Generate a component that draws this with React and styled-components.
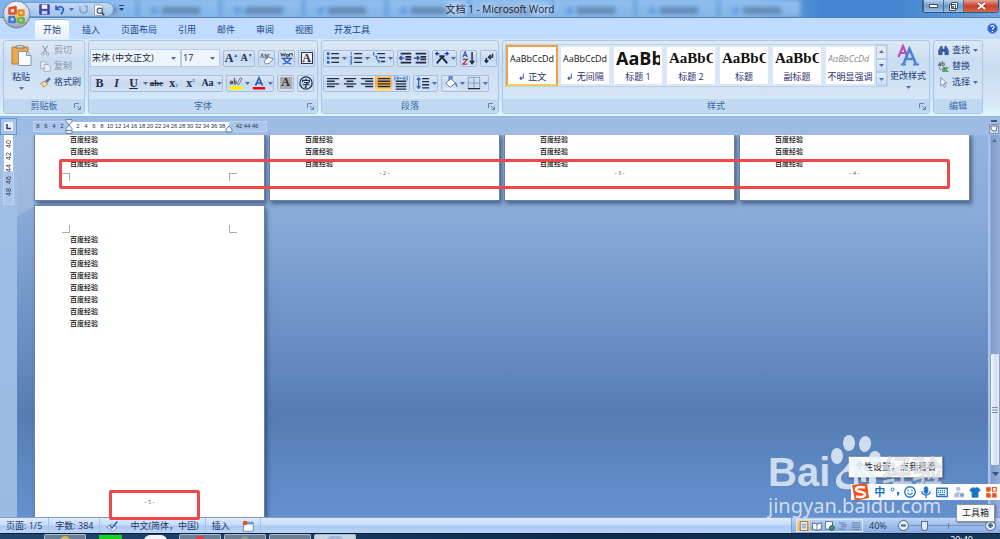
import styled, { createGlobalStyle } from 'styled-components';

const GlobalStyle = createGlobalStyle`
  * {
    box-sizing: border-box;
  }

  body {
    margin: 0;
    font-family: 'Open Sans', 'Noto Sans CJK SC', sans-serif;
    font-size: 9px;
    line-height: 12px;
    color: #1f3f7a;
    overflow: hidden;
  }

  button, select, input {
    font: inherit;
    color: inherit;
    margin: 0;
    padding: 0;
    border: 0;
    background: none;
  }

  svg {
    display: block;
    flex: none;
  }
`;

const Window = styled.div`
  position: relative;
  height: 100vh;
  display: flex;
  flex-direction: column;
  overflow: hidden;
`;

/* ---------- title bar ---------- */

const TitleBar = styled.header`
  position: relative;
  height: 18px;
  flex: none;
  display: grid;
  grid-template-columns: 1fr auto 1fr;
  align-items: start;
  background: linear-gradient(90deg, #7fb3ea 0%, #86b8ec 75%, #4186cf 82%, #4387d0 90%, #6ca5dd 100%);
  border-bottom: 1px solid #5580b4;
  overflow: hidden;
`;

const TitleLeft = styled.div`
  display: flex;
`;

const GlassTabs = styled.div`
  position: absolute;
  inset: 0;
  padding-left: 56px;
  display: flex;
  filter: blur(2px);
`;

const GlassTab = styled.div`
  width: 83px;
  flex: none;
  display: flex;
  align-items: center;
  gap: 4px;
  padding: 4px 6px 0 12px;
  background: linear-gradient(#90bff0, #84b4e6);
  border-right: 3px solid #5c98d8;

  &::before {
    content: '';
    width: 7px;
    height: 7px;
    border-radius: 50%;
    background: #5f9ae0;
  }

  &::after {
    content: '';
    width: 38px;
    height: 7px;
    background: #6289b6;
  }
`;

const Caption = styled.h1`
  position: relative;
  margin: 0;
  padding-top: 2px;
  text-align: center;
  font-size: 10px;
  line-height: 15px;
  font-weight: 400;
  color: #10203c;
  text-shadow: 0 0 5px #fff, 0 0 8px #fff;
`;

const QuickBar = styled.div`
  position: relative;
  margin: 2px 0 0 20px;
  padding: 0 8px 0 18px;
  height: 15px;
  width: 94px;
  display: flex;
  align-items: center;
  gap: 4px;
  border: 1px solid #6f9ccf;
  border-radius: 0 8px 8px 0;
  background: linear-gradient(#c3daf5, #a3c4ec);
`;

const QuickMore = styled.button`
  position: relative;
  width: 15px;
  height: 16px;
  display: grid;
  place-items: center;
`;

const Orb = styled.button`
  position: absolute;
  left: 2px;
  top: 0;
  z-index: 3;
`;

const WindowButtons = styled.div`
  position: relative;
  justify-self: end;
  display: flex;
  margin-right: 1px;
  height: 13px;
  border: 1px solid #33567f;
  border-top: 0;
  border-radius: 0 0 4px 4px;
  overflow: hidden;
`;

const WindowButton = styled.button`
  width: ${props => props.$close ? 35 : 20}px;
  display: grid;
  place-items: center;
  border-left: 1px solid #47688f;
  background: ${props => props.$close
    ? 'linear-gradient(#e6a497, #c8402b 50%, #d66a4e)'
    : 'linear-gradient(#b9d3ee, #6f9aca 50%, #9dc0e4)'};
`;

/* ---------- ribbon ---------- */

const TabStrip = styled.nav`
  height: 21px;
  flex: none;
  display: flex;
  align-items: flex-end;
  gap: 5px;
  padding: 0 2px 0 35px;
  background: #bfdbff;
`;

const Tab = styled.button`
  height: 20px;
  padding: 0 8px;
  line-height: 18px;
  color: #1d4585;
  border-radius: 3px 3px 0 0;
  border: ${props => props.$active ? '1px solid #9bbbe3' : '1px solid transparent'};
  border-width: 1px 0 0;
  background: ${props => props.$active ? 'linear-gradient(#fff, #e4eef9)' : 'none'};
`;

const Help = styled.button`
  margin: 0 0 5px auto;
`;

const Ribbon = styled.section`
  height: 78px;
  flex: none;
  display: flex;
  gap: 3px;
  padding: 1px 17px 2px 3px;
  border-bottom: 1px solid #8db2e3;
  background: linear-gradient(#dbe7f6, #c9dcf2 40%, #d5e6f6 80%, #dff6ff);
`;

const Panel = styled.section`
  flex: ${props => props.$grow ? '1 1 0' : 'none'};
  width: ${props => props.$width ? props.$width + 'px' : 'auto'};
  min-width: 0;
  display: flex;
  flex-direction: column;
  border: 1px solid #a9c6e8;
  border-radius: 3px;
  background: linear-gradient(#dde8f5, #d0e0f2 22%, #c9dcf0 24%, #dae9f8);
  overflow: hidden;
`;

const PanelBody = styled.div`
  flex: 1;
  display: flex;
  min-height: 0;
  padding: 0 1px;
`;

const PanelTitle = styled.footer`
  height: 14px;
  flex: none;
  display: grid;
  grid-template-columns: 10px 1fr 10px;
  align-items: center;
  text-align: center;
  color: #3b68a8;
  background: #c1d8f1;
`;

const ToolRows = styled.div`
  flex: 1;
  display: flex;
  flex-direction: column;
  gap: 7px;
  padding-top: 8px;
`;

const ToolRow = styled.div`
  height: 18px;
  display: flex;
  align-items: center;
  gap: 3px;
`;

const ToolGroup = styled.div`
  height: 17px;
  display: flex;
  border: 1px solid #a3bee2;
  border-radius: 2px;
  background: linear-gradient(#dbe7f6, #c5d8ef 50%, #d3e3f5);
`;

const Tool = styled.button`
  width: ${props => props.$narrow ? 15 : 17}px;
  display: grid;
  place-items: center;
  color: #1e2c45;
  background: ${props => props.$on ? 'linear-gradient(#f5c283, #fba63a 50%, #ffe08a)' : 'none'};
`;

const Drop = styled.button`
  width: 6px;
  display: grid;
  place-items: center;
`;

const ComboBox = styled.label`
  position: relative;
  width: ${props => props.$width}px;
  height: 18px;
  margin-right: ${props => props.$joined ? -3 : 0}px;
  display: flex;
  align-items: center;
  padding-right: 4px;
  border: 1px solid #b4cdea;
  background: #edf4fc;

  select {
    flex: 1;
    min-width: 0;
    appearance: none;
    padding-left: 1px;
    color: #16243c;
  }
`;

const BigButton = styled.button`
  width: ${props => props.$width}px;
  display: flex;
  flex-direction: column;
  align-items: center;
  padding-top: 3px;
  gap: 4px;
  white-space: nowrap;
`;

const SmallList = styled.div`
  display: flex;
  flex-direction: column;
  padding: 1px 0 0 3px;
`;

const SmallButton = styled.button`
  height: 16px;
  display: flex;
  align-items: center;
  gap: 3px;
  color: ${props => props.disabled ? '#8d98a9' : '#1f3f7a'};
  white-space: nowrap;
`;

/* ---------- style gallery ---------- */

const Gallery = styled.div`
  height: 43px;
  margin: 3px 0 0 1px;
  display: flex;
  border: 1px solid #bcd2ec;
  background: #d9e7f7;
`;

const GalleryItems = styled.div`
  display: flex;
  gap: 1px;
  width: 370px;
`;

const StyleCard = styled.button`
  width: 52px;
  flex: none;
  display: flex;
  flex-direction: column;
  align-items: center;
  border: ${props => props.$selected ? '2px solid #f0a03c' : '2px solid #d9e7f7'};
  border-bottom-color: ${props => props.$selected ? '#f8cf55' : '#d9e7f7'};
  background: #fff;
  overflow: hidden;
  color: #1f2d6e;
`;

const Sample = styled.span`
  width: 44px;
  height: 24px;
  line-height: 23px;
  overflow: hidden;
  text-align: left;
  white-space: nowrap;
  color: ${props => props.$faded ? '#8a8a8a' : '#111'};
  font-style: ${props => props.$faded ? 'italic' : 'normal'};
  font-weight: ${props => props.$size > 9 ? 700 : 400};
  font-size: ${props => props.$size}px;
  font-family: ${props => props.$serif ? "'Liberation Serif', serif" : "'Open Sans', sans-serif"};
`;

const GalleryScroll = styled.div`
  width: 11px;
  display: flex;
  flex-direction: column;

  button {
    flex: 1;
    display: grid;
    place-items: center;
    border: 1px solid #b5cbe8;
    background: linear-gradient(#e4eefa, #c8dbf3);
  }

  button:first-child {
    background: #e6e8ec;
  }
`;

/* ---------- rulers and pages ---------- */

const RulerRow = styled.div`
  height: 18px;
  flex: none;
  display: flex;
  align-items: center;
  background: #9dbbe3;
  font-family: 'Liberation Sans', sans-serif;
  font-size: 6px;
  line-height: 9px;
  color: #26344e;
`;

const TabStop = styled.button`
  width: 17px;
  height: 17px;
  display: grid;
  place-items: center;
  border: 1px solid #6d93cf;
  background: #a9c4ea;
`;

const Ruler = styled.div`
  position: relative;
  margin-left: 17px;
  display: flex;
`;

const RulerPart = styled.div`
  height: 9px;
  width: ${props => props.$width}px;
  padding-left: ${props => props.$pad}px;
  display: flex;
  background: ${props => props.$page ? '#fff' : '#abc6ea'};
  outline: ${props => props.$page ? 'none' : '1px solid #bcd3f0'};

  span {
    width: 8px;
    display: flex;
    justify-content: center;
  }
`;

const Indents = styled.svg`
  position: absolute;
  left: ${props => props.$left}px;
  top: -3px;
`;

const SplitBox = styled.button`
  width: 12px;
  height: 17px;
  margin-left: auto;
`;

const Workspace = styled.main`
  flex: 1;
  min-height: 0;
  display: flex;
`;

const SideRuler = styled.div`
  width: 17px;
  flex: none;
  padding-left: 4px;
  background: linear-gradient(#a1bee7, #9bbae2);
  font-family: 'Liberation Sans', sans-serif;
  font-size: 7px;
  line-height: 9px;
  color: #26344e;
`;

const SidePart = styled.div`
  width: 9px;
  height: ${props => props.$height}px;
  padding-top: ${props => props.$pad}px;
  background: ${props => props.$page ? '#fff' : '#abc6ea'};
  outline: ${props => props.$page ? 'none' : '1px solid #bcd3f0'};

  span {
    height: 12px;
    width: 9px;
    display: block;
    writing-mode: vertical-rl;
    transform: rotate(180deg);
    text-align: center;
  }
`;

const Canvas = styled.div`
  flex: 1;
  min-width: 0;
  overflow: hidden;
  padding-left: 17px;
  background:
    linear-gradient(150deg, rgba(255, 255, 255, 0.15) 0 70px, transparent 71px),
    linear-gradient(#93b3e0, #8aabd9 20%, #6b90c5 52%, #557db2 73%, #6491cf);
`;

const Pages = styled.div`
  height: calc(100% + 6px);
  margin-top: -2px;
  display: grid;
  grid-template-columns: repeat(auto-fill, 231px);
  grid-template-rows: 68px 1fr;
  gap: 4px;
`;

const Page = styled.article`
  display: flex;
  flex-direction: column;
  padding: ${props => props.$last ? '20px 28px 14px' : '0 28px'};
  background: #fff;
  outline: 1px solid #69809f;
  outline-offset: -1px;
  box-shadow: 2px 3px 4px rgba(30, 50, 90, 0.6);
  font-family: 'Noto Sans CJK SC', sans-serif;
  font-size: 7px;
  line-height: 12px;
  color: #000;

  p {
    margin: 0;
    padding-left: 8px;
    font-weight: 500;
  }
`;

const Marks = styled.div`
  display: flex;
  justify-content: space-between;
  margin-top: ${props => props.$top ? 0 : 4}px;

  i {
    width: 8px;
    height: 8px;
    border: 0 solid #aaa;
    border-width: ${props => props.$top ? '0 1px 1px 0' : '1px 1px 0 0'};
  }

  i + i {
    border-width: ${props => props.$top ? '0 0 1px 1px' : '1px 0 0 1px'};
  }
`;

const PageNumber = styled.div`
  margin-top: ${props => props.$bottom ? 'auto' : 0};
  text-align: center;
  font-family: 'Liberation Serif', serif;
  font-size: 6px;
  line-height: 9px;
  color: #555;
`;

const ScrollTrack = styled.div`
  width: 12px;
  flex: none;
  display: flex;
  flex-direction: column;
  align-items: center;
  padding: 4px 1px 38px 2px;
  background: linear-gradient(90deg, #a9c3ea 0 2px, #7f9bc9 3px, #94afd8);
`;

const ScrollThumb = styled.div`
  width: 10px;
  height: 113px;
  margin: auto 0 3px;
  display: grid;
  place-items: center;
  border: 1px solid #8ba3c6;
  border-radius: 2px;
  background: linear-gradient(90deg, #f2f6fc, #d3deee 60%, #e5ecf6);
`;

/* ---------- status bar and taskbar ---------- */

const StatusBar = styled.footer`
  height: 16px;
  flex: none;
  display: flex;
  align-items: stretch;
  border-top: 1px solid #7c9fd0;
  background: linear-gradient(#dfebfb, #c6dcf8 45%, #a9c8f2 55%, #bcd5f6);
  color: #1d3462;
`;

const StatusItem = styled.button`
  padding: 0 6px;
  display: flex;
  align-items: center;
  border-right: ${props => props.$plain ? '0' : '1px solid #a5c1e8'};
  white-space: nowrap;
`;

const StatusRight = styled.div`
  margin-left: auto;
  width: 209px;
  padding: 0 4px;
  display: flex;
  align-items: center;
  gap: 6px;
  border-left: 1px solid #7e9fce;
  background: linear-gradient(#c0d7f6, #9dbdea 50%, #88ade2);
`;

const Views = styled.div`
  display: flex;
  height: 13px;
  border: 1px solid #d9e7fa;
`;

const ViewButton = styled.button`
  width: 13px;
  display: grid;
  place-items: center;
  background: ${props => props.$on ? 'linear-gradient(#fbd892, #ffb84e)' : 'none'};
`;

const ZoomGroup = styled.div`
  margin-left: auto;
  display: flex;
  align-items: center;
  gap: 1px;
`;

const ZoomSlider = styled.input`
  appearance: none;
  width: 74px;
  height: 12px;
  background:
    linear-gradient(#6482ae, #6482ae) 38px 50% / 1px 6px no-repeat,
    linear-gradient(#6f8fbd, #6f8fbd) 0 50% / 100% 1px no-repeat;

  &::-webkit-slider-thumb {
    appearance: none;
    width: 7px;
    height: 10px;
    border: 1px solid #5471a0;
    border-radius: 1px 1px 4px 4px;
    background: #dfeafa;
  }
`;

const TaskBar = styled.div`
  height: 6px;
  flex: none;
  display: flex;
  gap: 3px;
  padding-left: 44px;
  overflow: hidden;
  background: linear-gradient(90deg, #21466e, #17385f 30%, #0e2a4d 60%, #14375c);
  border-top: 1px solid #0c1d33;
`;

const TaskButton = styled.button`
  width: 42px;
  display: flex;
  justify-content: center;
  align-items: flex-start;
  border: ${props => props.$bare ? '0' : '1px solid #a9bccd'};
  border-bottom: 0;
  border-radius: 2px 2px 0 0;
  background: ${props => props.$bare ? 'none' : props.$active ? '#c5d5e4' : '#6a7f95'};
`;

const TaskIcon = styled.span`
  width: ${props => props.$width}px;
  height: 8px;
  margin-top: 1px;
  border-radius: ${props => props.$round ? '6px 6px 0 0' : 0};
  background: ${props => props.$color};
`;

const Clock = styled.time`
  margin: 0 27px 0 auto;
  padding-top: 1px;
  line-height: 9px;
  color: #fff;
`;

/* ---------- things lying over the window ---------- */

const Highlight = styled.div`
  position: absolute;
  z-index: 4;
  left: ${props => props.$left}px;
  top: ${props => props.$top}px;
  width: ${props => props.$width}px;
  height: 30px;
  border: 3px solid #f04848;
  border-radius: 2px;
`;

const Watermark = styled.div`
  position: absolute;
  z-index: 5;
  right: 54px;
  bottom: 21px;
  width: 178px;
  color: rgba(232, 240, 250, 0.82);
  pointer-events: none;
`;

const WatermarkTop = styled.div`
  display: flex;
  align-items: flex-end;
  height: 60px;
  font-family: 'Liberation Sans', 'Noto Sans CJK SC', sans-serif;
  font-size: 40px;
  line-height: 44px;
  font-weight: 700;

  svg {
    margin-bottom: 4px;
  }

  small {
    font-size: 30px;
    font-weight: 400;
    color: rgba(240, 240, 240, 0.6);
    -webkit-text-stroke: 1px rgba(205, 210, 218, 0.8);
  }
`;

const WatermarkUrl = styled.div`
  font-family: 'Noto Sans', sans-serif;
  font-size: 20px;
  line-height: 24px;
`;

const Tip = styled.div`
  position: absolute;
  z-index: ${props => props.$front ? 7 : 4};
  right: ${props => props.$right}px;
  bottom: ${props => props.$bottom}px;
  padding: ${props => props.$front ? '2px 5px' : '4px 6px'};
  border: 1px solid #8d939c;
  background: #fafbfd;
  color: #222;
  box-shadow: 1px 1px 2px rgba(0, 0, 0, 0.35);
  white-space: nowrap;
`;

const InputBar = styled.div`
  position: absolute;
  z-index: 6;
  right: 0;
  bottom: 39px;
  width: 149px;
  height: 16px;
  padding-right: 3px;
  display: flex;
  align-items: center;
  justify-content: space-between;
  background: #fff;
  color: #1a73c8;

  button {
    font-size: 11px;
    font-weight: 700;
    line-height: 14px;
  }
`;

const Caret = ({ up }) => (
  <svg width="5" height="3" viewBox="0 0 5 3">
    <path d={up ? 'M0 3h5L2.5 0z' : 'M0 0h5L2.5 3z'} fill="#4d6fa8" />
  </svg>
);

const Launcher = () => (
  <svg width="7" height="7" viewBox="0 0 7 7" fill="none" stroke="#6583b0">
    <path d="M.5 5V.5H5M3 3l3 3M6.500 3.500v3h-3" />
  </svg>
);

const Icon = ({ size = 14, children }) => (
  <svg width={size} height={size} viewBox="0 0 16 16" fill="none" stroke="currentColor">{children}</svg>
);

const Glyph = styled.span`
  font-family: 'Liberation Serif', serif;
  font-size: ${props => props.$size || 12}px;
  line-height: 14px;
  font-weight: 700;
  font-style: ${props => props.$italic ? 'italic' : 'normal'};
  text-decoration: ${props => props.$line || 'none'};
  white-space: nowrap;

  sup, sub {
    font-size: 5px;
    line-height: 0;
    color: #2b5fb5;
  }

  sub {
    vertical-align: baseline;
  }
`;

const Boxed = styled(Glyph)`
  width: 12px;
  height: 12px;
  line-height: 11px;
  border: ${props => props.$fill ? '0' : '1px solid #333'};
  background: ${props => props.$fill ? '#aaa' : '#eef3fa'};
`;

const lineSets = {
  left: ['M1 3h14', 'M1 6h9', 'M1 9h14', 'M1 12h9'],
  center: ['M1 3h14', 'M4 6h8', 'M1 9h14', 'M4 12h8'],
  right: ['M1 3h14', 'M6 6h9', 'M1 9h14', 'M6 12h9'],
  justify: ['M1 3h14', 'M1 6h14', 'M1 9h14', 'M1 12h14'],
};

const Lines = ({ kind }) => (
  <Icon>
    <path d={lineSets[kind].join('')} strokeWidth="1.7" />
  </Icon>
);

const ListIcon = ({ numbered, nested }) => (
  <Icon>
    {nested
      ? <path d="M6 3h9M8 7.500h7M10 12h5" strokeWidth="1.5" />
      : <path d="M6 3h9M6 8h9M6 13h9" strokeWidth="1.5" />}
    {numbered
      ? <path d="M2.500 1v4M1 6.500h2v3H1.500M1 11h2v4H1M1 13h2" stroke="#2d62c0" />
      : nested
        ? <path d="M2 1v4M3.500 6h2v4M6 11h2v3" stroke="#2d62c0" strokeWidth="1.300" />
        : <path d="M1 3h3M1 8h3M1 13h3" stroke="#2d62c0" strokeWidth="3" />}
  </Icon>
);

const IndentIcon = ({ more }) => (
  <Icon size={13}>
    <path d="M2 2h13M8 6h7M8 9h7M2 13h13" strokeWidth="2" />
    <path d={more ? 'M0 7.500h6M3.500 5l3 2.500-3 2.500' : 'M6.500 7.500h-6M3.500 5l-3 2.500 3 2.500'} stroke="#1c3f94" strokeWidth="1.500" />
  </Icon>
);

const OfficeLogo = () => (
  <svg width="30" height="30" viewBox="0 0 30 30">
    <defs>
      <radialGradient id="orb" cx="50%" cy="25%" r="75%">
        <stop offset="0" stopColor="#fff" />
        <stop offset="0.6" stopColor="#d3dbe6" />
        <stop offset="1" stopColor="#8c9db5" />
      </radialGradient>
    </defs>
    <circle cx="14.500" cy="14.500" r="13.500" fill="url(#orb)" stroke="#6d86a8" />
    <g fill="none" strokeWidth="2.600" strokeLinejoin="round">
      <path d="M13.500 13.500H7.500v-5l6-1.500z" stroke="#e2502a" />
      <path d="M16.500 10.500h5v4.500h-5z" stroke="#f08a24" />
      <path d="M7.500 17H13v5H7.500z" stroke="#3c7bd0" />
      <path d="M16 18h5.500v5L16 22z" stroke="#72b43c" />
    </g>
    <path d="M13 14.500h3.500V18H13z" fill="#f7c436" />
  </svg>
);

const PasteIcon = () => (
  <svg width="21" height="23" viewBox="0 0 21 23">
    <path d="M1 3h16v17H1z" fill="#e9a94c" stroke="#b87b2c" />
    <path d="M5 4V2h2.500Q9 0 10.500 2H13v2z" fill="#e6e9ee" stroke="#777" />
    <path d="M7.500 7.500h8l4.500 4v10H7.500z" fill="#fdfdff" stroke="#8196b8" />
    <path d="M15.500 7.500v4H20" fill="#d4e0f2" stroke="#8196b8" />
  </svg>
);

const ChangeStylesIcon = () => (
  <svg width="22" height="22" viewBox="0 0 22 22" fill="none">
    <path d="M1.500 13L6 2l4.500 11M3 9h6" stroke="#b64ebd" strokeWidth="2.200" />
    <path d="M6.500 20L12.500 5l6.500 15M9 15h8" stroke="#4f82d4" strokeWidth="2.600" />
    <path d="M4 20.500h5M16 20.500h6" stroke="#4f82d4" strokeWidth="2" />
  </svg>
);

const Paw = () => (
  <svg width="52" height="56" viewBox="0 0 52 56" fill="currentColor">
    <ellipse cx="7" cy="22" rx="6" ry="8" />
    <ellipse cx="19" cy="9" rx="6" ry="8" />
    <ellipse cx="35" cy="10" rx="6" ry="8" transform="rotate(8 35 10)" />
    <ellipse cx="45" cy="24" rx="6" ry="7" />
    <path fillRule="evenodd" d="M26 25c6 0 9 6 13 10 5 5 8 8 7 13-1 6-6 7-11 7-5-1-8-1-13 0-7 1-15 0-16-6-1-7 4-10 8-14 4-5 7-10 12-10zM21 38c-6-1-10 2-10 6s4 7 10 6h3V33h-3zM28 38v9q0 4 5 4h6V38h-3v10h-3q-2 0-2-3v-7z" />
  </svg>
);

const styleCards = [
  { name: '↲ 正文', size: 9, sample: 'AaBbCcDd', selected: true },
  { name: '↲ 无间隔', size: 9, sample: 'AaBbCcDd' },
  { name: '标题 1', size: 18, sample: 'AaBb' },
  { name: '标题 2', size: 15, sample: 'AaBbC', serif: true },
  { name: '标题', size: 15, sample: 'AaBbC', serif: true },
  { name: '副标题', size: 15, sample: 'AaBbC', serif: true },
  { name: '不明显强调', size: 9, sample: 'AaBbCcDd', faded: true },
];

const tabs = ['开始', '插入', '页面布局', '引用', '邮件', '审阅', '视图', '开发工具'];
const rulerNumbers = Array.from({ length: 19 }, (_, i) => (i + 1) * 2);

const Numbers = ({ list }) => list.map(n => <span key={n}>{n}</span>);
const TextLines = ({ count }) => Array.from({ length: count }, (_, i) => <p key={i}>百度经验</p>);

const RibbonPanel = ({ title, launcher = true, children, ...rest }) => (
  <Panel {...rest}>
    <PanelBody>{children}</PanelBody>
    <PanelTitle>
      <span />
      <span>{title}</span>
      {launcher && <Launcher />}
    </PanelTitle>
  </Panel>
);

const ClipboardPanel = () => (
  <RibbonPanel title="剪贴板" $width={82}>
    <BigButton $width={32}>
      <PasteIcon />
      <span>粘贴</span>
      <Caret />
    </BigButton>
    <SmallList>
      <SmallButton disabled>
        <Icon size={11}><path d="M4 1l6 10M11 1L5 11" strokeWidth="1.500" /><circle cx="4" cy="13" r="2" /><circle cx="11" cy="13" r="2" /></Icon>
        剪切
      </SmallButton>
      <SmallButton disabled>
        <Icon size={11}><path d="M1 1h6l2 2v8H1z" fill="#e8edf5" /><path d="M6 5h6l3 3v7H6z" fill="#e8edf5" /></Icon>
        复制
      </SmallButton>
      <SmallButton>
        <Icon size={11}><path d="M1 9l6-3 4 4-5 5z" fill="#f4d98a" stroke="#a47a2c" /><path d="M8 6l5-5 2 2-5 5z" fill="#5577ad" stroke="#334f80" /></Icon>
        格式刷
      </SmallButton>
    </SmallList>
  </RibbonPanel>
);

const FontPanel = () => (
  <RibbonPanel title="字体" $width={230}>
    <ToolRows>
      <ToolRow>
        <ComboBox $width={91} $joined>
          <select aria-label="字体"><option>宋体 (中文正文)</option></select>
          <Caret />
        </ComboBox>
        <ComboBox $width={39}>
          <select aria-label="字号"><option>17</option></select>
          <Caret />
        </ComboBox>
        <ToolGroup>
          <Tool $narrow aria-label="增大字体"><Glyph>A<sup>▲</sup></Glyph></Tool>
          <Tool $narrow aria-label="缩小字体"><Glyph $size={10}>A<sup>▼</sup></Glyph></Tool>
        </ToolGroup>
        <ToolGroup>
          <Tool $narrow aria-label="清除格式">
            <Icon><path d="M1 8l1.500-5L4 8M6 3v5h2V5H6M11 4H9v4h2" stroke="#555" /><path d="M5 11l5-4 5 2-4 5-5 1z" fill="#fff" stroke="#6b7fa5" /></Icon>
          </Tool>
        </ToolGroup>
        <ToolGroup>
          <Tool $narrow aria-label="拼音指南">
            <Icon><path d="M1 2l1 4 1.500-3L5 6l1-4M7 4h3v2H7zM11 6V3h3v3" stroke="#333" /><path d="M2 8.500h12M8 7v2M4 9q3 5 9 6M12 9q-3 5-9 6" stroke="#2b5ad0" strokeWidth="1.500" /></Icon>
          </Tool>
        </ToolGroup>
        <ToolGroup><Tool $narrow aria-label="字符边框"><Boxed>A</Boxed></Tool></ToolGroup>
      </ToolRow>
      <ToolRow>
        <ToolGroup>
          <Tool aria-label="加粗"><Glyph>B</Glyph></Tool>
          <Tool aria-label="倾斜"><Glyph $italic>I</Glyph></Tool>
          <Tool aria-label="下划线"><Glyph $line="underline">U</Glyph></Tool>
          <Drop aria-label="下划线选项"><Caret /></Drop>
          <Tool aria-label="删除线"><Glyph $size={9} $line="line-through">abc</Glyph></Tool>
          <Tool aria-label="下标"><Glyph>x<sub>2</sub></Glyph></Tool>
          <Tool aria-label="上标"><Glyph>x<sup>2</sup></Glyph></Tool>
          <Tool aria-label="更改大小写"><Glyph $size={10}>Aa</Glyph></Tool>
          <Drop aria-label="大小写选项"><Caret /></Drop>
        </ToolGroup>
        <ToolGroup>
          <Tool aria-label="突出显示">
            <Icon><path d="M1 11.500h14v4H1z" fill="#fff200" stroke="none" /><path d="M1 6h3v3H1.500V7.500H4M6 2v7h2V6H6" stroke="#333" /><path d="M9 9l4-7 2 1-4 7z" fill="#dfe6f2" stroke="#5b6d8f" /></Icon>
          </Tool>
          <Drop aria-label="突出显示颜色"><Caret /></Drop>
          <Tool aria-label="字体颜色">
            <Icon><path d="M1 12.500h14v3H1z" fill="#f00018" stroke="none" /><path d="M4 11l4-9 4 9M5.500 8h5" stroke="#3a5fa5" strokeWidth="2" /></Icon>
          </Tool>
          <Drop aria-label="字体颜色选项"><Caret /></Drop>
        </ToolGroup>
        <ToolGroup><Tool $narrow aria-label="字符底纹"><Boxed $fill>A</Boxed></Tool></ToolGroup>
        <ToolGroup>
          <Tool $narrow aria-label="带圈字符">
            <Icon><circle cx="8" cy="8" r="7" strokeWidth="1.400" /><path d="M8 3v2M4 7V5h8v2M5.500 7.500h5L8 9.500V13H6.500M4 10h8" strokeWidth="1.200" /></Icon>
          </Tool>
        </ToolGroup>
      </ToolRow>
    </ToolRows>
  </RibbonPanel>
);

const ParagraphPanel = () => (
  <RibbonPanel title="段落" $width={178}>
    <ToolRows>
      <ToolRow>
        <ToolGroup>
          <Tool aria-label="项目符号"><ListIcon /></Tool>
          <Drop aria-label="项目符号选项"><Caret /></Drop>
          <Tool aria-label="编号"><ListIcon numbered /></Tool>
          <Drop aria-label="编号选项"><Caret /></Drop>
          <Tool aria-label="多级列表"><ListIcon nested /></Tool>
          <Drop aria-label="多级列表选项"><Caret /></Drop>
        </ToolGroup>
        <ToolGroup>
          <Tool $narrow aria-label="减少缩进量"><IndentIcon /></Tool>
          <Tool $narrow aria-label="增加缩进量"><IndentIcon more /></Tool>
        </ToolGroup>
        <ToolGroup>
          <Tool aria-label="中文版式">
            <Icon><path d="M2 14l6-7 6 7M5 6h6" strokeWidth="2.200" /><path d="M1 3h4M3 1L1 3l2 2M15 3h-4M13 1l2 2-2 2" stroke="#2536b0" strokeWidth="1.500" /></Icon>
          </Tool>
          <Drop aria-label="中文版式选项"><Caret /></Drop>
        </ToolGroup>
        <ToolGroup>
          <Tool $narrow aria-label="排序">
            <Icon><path d="M1 7l2.500-6L6 7M2 5h3" stroke="#2c5fc0" strokeWidth="1.400" /><path d="M1 9.500h5L1 15h5" stroke="#a5303e" strokeWidth="1.400" /><path d="M11.500 1v13M9 11l2.500 3.500L14 11" strokeWidth="1.700" /></Icon>
          </Tool>
        </ToolGroup>
        <ToolGroup>
          <Tool $narrow aria-label="显示编辑标记">
            <Icon><path d="M12 3v4H8M10 4.500L7.500 7l2.500 2.500M5 8v4M3 10.500L5 13l2-2.500" strokeWidth="1.700" /></Icon>
          </Tool>
        </ToolGroup>
      </ToolRow>
      <ToolRow>
        <ToolGroup>
          <Tool aria-label="左对齐"><Lines kind="left" /></Tool>
          <Tool aria-label="居中"><Lines kind="center" /></Tool>
          <Tool aria-label="右对齐"><Lines kind="right" /></Tool>
          <Tool $on aria-label="两端对齐"><Lines kind="justify" /></Tool>
          <Tool aria-label="分散对齐">
            <Icon><path d="M2 6h12M2 9h12M2 12h12M2 15h12" strokeWidth="1.700" /><path d="M1 0v5M15 0v5M3 2.500h10M5 .5l-2 2 2 2M11 .5l2 2-2 2" stroke="#2c5fc0" /></Icon>
          </Tool>
        </ToolGroup>
        <ToolGroup>
          <Tool aria-label="行距">
            <Icon><path d="M7 3h8M7 6.500h8M7 10h8M7 13.500h8" strokeWidth="1.500" /><path d="M3 2v12M1 4.500L3 2l2 2.500M1 11.500L3 14l2-2.500" stroke="#2c5fc0" strokeWidth="1.500" /></Icon>
          </Tool>
          <Drop aria-label="行距选项"><Caret /></Drop>
        </ToolGroup>
        <ToolGroup>
          <Tool aria-label="底纹">
            <Icon><path d="M2 8l6-5 5 5-6 5z" fill="#fff" stroke="#51678f" /><path d="M6 5V1h3v3M13 8q2 3 1 4" stroke="#3b68b5" strokeWidth="1.500" /><path d="M1 14.500h14" stroke="#e7edf6" strokeWidth="2" /></Icon>
          </Tool>
          <Drop aria-label="底纹选项"><Caret /></Drop>
          <Tool aria-label="框线">
            <Icon><path d="M1.500 1.500h13V14M1.500 1.500V14M8 2v12M2 8h12" stroke="#8595b3" /><path d="M1 14.500h14" strokeWidth="1.500" /></Icon>
          </Tool>
          <Drop aria-label="框线选项"><Caret /></Drop>
        </ToolGroup>
      </ToolRow>
    </ToolRows>
  </RibbonPanel>
);

const StylesPanel = () => (
  <RibbonPanel title="样式" $grow>
    <Gallery>
      <GalleryItems>
        {styleCards.map(card => (
          <StyleCard key={card.name} $selected={card.selected}>
            <Sample $size={card.size} $serif={card.serif} $faded={card.faded}>{card.sample}</Sample>
            <span>{card.name}</span>
          </StyleCard>
        ))}
      </GalleryItems>
      <GalleryScroll>
        <button aria-label="上一行"><Caret up /></button>
        <button aria-label="下一行"><Caret /></button>
        <button aria-label="其他"><Caret /></button>
      </GalleryScroll>
    </Gallery>
    <BigButton $width={41}>
      <ChangeStylesIcon />
      <span>更改样式</span>
      <Caret />
    </BigButton>
  </RibbonPanel>
);

const EditPanel = () => (
  <RibbonPanel title="编辑" launcher={false} $width={50}>
    <SmallList>
      <SmallButton>
        <Icon size={11}><path d="M1 14V8l3-6h2v12zM10 14V2h2l3 6v6zM6 6h4v3H6z" fill="#3d64a8" stroke="#2c4c88" /></Icon>
        查找
        <Caret />
      </SmallButton>
      <SmallButton>
        <Icon size={11}><path d="M1 3h3v4H1V5h3M6 0v7h3V3H6" stroke="#333" /><path d="M7 10h3v5H7v-3h3M15 10h-3v5h3" stroke="#2b8b3c" strokeWidth="1.500" /><path d="M2 9q0 4 3 4" stroke="#2c5fc0" /></Icon>
        替换
      </SmallButton>
      <SmallButton>
        <Icon size={11}><path d="M4 1v12l3-3 2 5 2-1-2-5h4z" fill="#fff" stroke="#55698c" /></Icon>
        选择
        <Caret />
      </SmallButton>
    </SmallList>
  </RibbonPanel>
);

const App = () => {
  return (
    <Window>
      <GlobalStyle />

      <TitleBar>
        <GlassTabs>
          {Array.from({ length: 9 }, (_, i) => <GlassTab key={i} />)}
        </GlassTabs>
        <TitleLeft>
          <QuickBar>
            <Icon size={11}><path d="M1 1h14v14H1z" fill="#4548b4" stroke="#2b2e8a" /><path d="M4 1h8v6H4z" fill="#f4f6fc" stroke="none" /><path d="M4 10h8v5H4z" fill="#c8cde8" stroke="none" /></Icon>
            <Icon size={11}><path d="M3 2v6h6M3 8q5-7 10-2 2 4-3 9" stroke="#2a5fc4" strokeWidth="2.500" /></Icon>
            <Caret />
            <Icon size={11}><path d="M3 3q-2 10 5 10 6 0 5-6M9 3h4v4" stroke="#8ba5ca" strokeWidth="2.500" /></Icon>
            <Icon size={12}><path d="M2 1h8l3 3v11H2z" fill="#fff" stroke="#77879f" /><circle cx="9" cy="9" r="3.500" fill="#d5e5f7" stroke="#4d5a70" strokeWidth="1.500" /><path d="M12 12l3 3" stroke="#333" strokeWidth="2" /></Icon>
          </QuickBar>
          <QuickMore aria-label="自定义快速访问工具栏">
            <svg width="5" height="6" viewBox="0 0 5 6"><path d="M0 0h5v1H0zM0 3h5L2.500 6z" fill="#1f3f7a" /></svg>
          </QuickMore>
        </TitleLeft>
        <Caption>文档 1 - Microsoft Word</Caption>
        <WindowButtons>
          <WindowButton aria-label="最小化"><svg width="9" height="4"><path d="M.5.5h8v3h-8z" fill="#fff" stroke="#3d4b63" /></svg></WindowButton>
          <WindowButton aria-label="还原"><svg width="9" height="9" fill="#fff" stroke="#3d4b63"><path d="M2.500.5h6v6h-6zM.5 2.500h6v6h-6z" /><path d="M2.500 4.500h2v2h-2z" fill="#7ba0ca" /></svg></WindowButton>
          <WindowButton $close aria-label="关闭"><svg width="9" height="8"><path d="M1 1l7 6M8 1L1 7" stroke="#7b2c24" strokeWidth="3" /><path d="M1 1l7 6M8 1L1 7" stroke="#fff" strokeWidth="2" /></svg></WindowButton>
        </WindowButtons>
      </TitleBar>
      <Orb aria-label="Office 按钮"><OfficeLogo /></Orb>

      <TabStrip>
        {tabs.map((name, i) => <Tab key={name} $active={i === 0}>{name}</Tab>)}
        <Help aria-label="帮助">
          <svg width="11" height="11" viewBox="0 0 11 11">
            <circle cx="5.500" cy="5.500" r="5" fill="#2c63d4" stroke="#86a5da" />
            <path d="M4 4q0-1.500 1.500-1.500T7 4q0 1-1.500 2v.8M5.500 8v1" fill="none" stroke="#fff" strokeWidth="1.200" />
          </svg>
        </Help>
      </TabStrip>

      <Ribbon>
        <ClipboardPanel />
        <FontPanel />
        <ParagraphPanel />
        <StylesPanel />
        <EditPanel />
      </Ribbon>

      <RulerRow>
        <TabStop aria-label="制表符">
          <svg width="9" height="9"><path d="M0 0h9v9H0z" fill="#e8f0fb" /><path d="M3 2v4.500h4" fill="none" stroke="#1f3f7a" strokeWidth="1.500" /></svg>
        </TabStop>
        <Ruler>
          <RulerPart $width={35} $pad={0}><Numbers list={[8, 6, 4, 2]} /></RulerPart>
          <RulerPart $page $width={161} $pad={5}><Numbers list={rulerNumbers} /></RulerPart>
          <RulerPart $width={36} $pad={5}><Numbers list={[42, 44, 46]} /></RulerPart>
          <Indents $left={31} width="8" height="16" viewBox="0 0 8 16" fill="#e8eff9" stroke="#6b82a8">
            <path d="M1 .5h6v2L4 6 1 2.500zM4 6l3 3.500v2H1v-2zM1 11.500h6v3H1z" />
          </Indents>
          <Indents $left={191} width="8" height="16" viewBox="0 0 8 16" fill="#e8eff9" stroke="#6b82a8">
            <path d="M4 7l3 3v3H1v-3z" />
          </Indents>
        </Ruler>
        <SplitBox aria-label="查看标尺">
          <svg width="12" height="17"><path d="M3 2h6v2H3z" fill="#3d5480" /><path d="M1.500 6.500h9v9h-9z" fill="#d3dce9" stroke="#8292ad" /><path d="M3 8h6l-1 5H5L3 11z" fill="#fff" stroke="#59698a" /></svg>
        </SplitBox>
      </RulerRow>

      <Workspace>
        <SideRuler>
          <SidePart $page $height={37} $pad={3}><Numbers list={[40, 42, 44]} /></SidePart>
          <SidePart $height={32} $pad={2}><Numbers list={[46, 48]} /></SidePart>
        </SideRuler>
        <Canvas>
          <Pages>
            <Page>
              <TextLines count={3} />
              <Marks><i /><i /></Marks>
            </Page>
            {[2, 3, 4].map(n => (
              <Page key={n}>
                <TextLines count={3} />
                <PageNumber>- {n} -</PageNumber>
              </Page>
            ))}
            <Page $last>
              <Marks $top><i /><i /></Marks>
              <TextLines count={8} />
              <PageNumber $bottom>- 5 -</PageNumber>
            </Page>
          </Pages>
        </Canvas>
        <ScrollTrack>
          <Caret up />
          <ScrollThumb><svg width="6" height="6"><path d="M0 .5h6M0 3h6M0 5.500h6" stroke="#7d8fae" /></svg></ScrollThumb>
          <Drop aria-label="向下滚动"><svg width="7" height="10"><path d="M0 3h7L3.500 7z" fill="#37507e" /></svg></Drop>
        </ScrollTrack>
      </Workspace>

      <StatusBar>
        <StatusItem>页面: 1/5</StatusItem>
        <StatusItem>字数: 384</StatusItem>
        <StatusItem $plain aria-label="拼写检查">
          <Icon size={12}><path d="M1 9l6-3 8 4-6 5z" fill="#fff" stroke="#5c7097" /><path d="M5 7l3 4 7-9" stroke="#2a5fc4" strokeWidth="2" /></Icon>
        </StatusItem>
        <StatusItem>中文(简体，中国)</StatusItem>
        <StatusItem $plain>插入</StatusItem>
        <StatusItem aria-label="宏">
          <Icon size={12}><path d="M2 3h13v12H2z" fill="#fff" stroke="#5c7097" /><path d="M2 3h13v3H2z" fill="#6f95cf" stroke="none" /><circle cx="4" cy="4" r="3" fill="#e0502c" stroke="none" /></Icon>
        </StatusItem>
        <StatusRight>
          <Views>
            <ViewButton $on aria-label="页面视图"><Icon size={10}><path d="M2 1h12v14H2z" fill="#fff" /><path d="M4 5h8M4 8h8M4 11h8" /></Icon></ViewButton>
            <ViewButton aria-label="阅读版式"><Icon size={10}><path d="M1 3l7 2 7-2v10l-7 2-7-2zM8 5v10" fill="#fff" /></Icon></ViewButton>
            <ViewButton aria-label="Web 版式"><Icon size={10}><path d="M1 1h11v12H1z" fill="#fff" /><circle cx="11" cy="11" r="4" fill="#3f9b62" /></Icon></ViewButton>
            <ViewButton aria-label="大纲视图"><Icon size={10}><path d="M1 3h10M5 6h9M5 9h9M1 13h10" stroke="#6d7f9e" strokeWidth="1.500" /></Icon></ViewButton>
            <ViewButton aria-label="普通视图"><Icon size={10}><path d="M1 3h14M1 6.500h14M1 10h14M1 13.500h14" stroke="#6d7f9e" strokeWidth="1.500" /></Icon></ViewButton>
          </Views>
          <span>40%</span>
          <ZoomGroup>
            <button aria-label="缩小"><svg width="11" height="11" fill="#e6effb" stroke="#4a658f"><circle cx="5.500" cy="5.500" r="5" /><path d="M3 5.500h5" strokeWidth="2" /></svg></button>
            <ZoomSlider type="range" min="10" max="200" defaultValue="40" aria-label="显示比例" />
            <button aria-label="放大"><svg width="11" height="11" fill="#e6effb" stroke="#4a658f"><circle cx="5.500" cy="5.500" r="5" /><path d="M3 5.500h5M5.500 3v5" strokeWidth="2" /></svg></button>
          </ZoomGroup>
        </StatusRight>
      </StatusBar>

      <TaskBar>
        <TaskButton aria-label="文件夹"><TaskIcon $width={10} $color="#d8b45a" $round /></TaskButton>
        <TaskButton $bare aria-label="视频"><TaskIcon $width={23} $color="#14d414" /></TaskButton>
        <TaskButton $bare aria-label="播放器"><TaskIcon $width={23} $color="#f2f4f8" $round /></TaskButton>
        <TaskButton aria-label="浏览器"><TaskIcon $width={10} $color="#ee3a32" $round /></TaskButton>
        <TaskButton aria-label="资源管理器"><TaskIcon $width={8} $color="#8d9c90" $round /></TaskButton>
        <TaskButton aria-label="应用" />
        <TaskButton $active aria-label="Word"><TaskIcon $width={18} $color="#9fb6d8" $round /></TaskButton>
        <Clock>20:40</Clock>
      </TaskBar>

      <Highlight $left={59} $top={159} $width={891} />
      <Highlight $left={109} $top={490} $width={91} />

      <Tip $right={57} $bottom={61}>个性设置，点我看看</Tip>
      <Watermark>
        <WatermarkTop>
          <span>Bai</span>
          <Paw />
          <small>经验</small>
        </WatermarkTop>
        <WatermarkUrl>jingyan.baidu.com</WatermarkUrl>
      </Watermark>

      <InputBar>
        <svg width="19" height="20" viewBox="0 0 19 20">
          <path d="M1 3l15-2 2 15-14 3z" fill="#f4511e" />
          <path d="M14 5.500Q5 4 5 7.500c0 3 9 1.500 9 5 0 3-5 3-9 2" fill="none" stroke="#fff" strokeWidth="2.500" />
        </svg>
        <button>中</button>
        <button aria-label="中文标点"><svg width="10" height="10"><circle cx="2.500" cy="2.500" r="1.500" fill="none" stroke="currentColor" /><path d="M7 5h2.500q0 3-2.500 4.500l.5-2H7z" fill="currentColor" /></svg></button>
        <button aria-label="表情"><Icon size={12}><circle cx="8" cy="8" r="7" strokeWidth="1.800" /><path d="M5.500 5v2M10.500 5v2M4.500 9q3.500 5 7 0" strokeWidth="1.600" /></Icon></button>
        <button aria-label="语音"><Icon size={12}><rect x="5.500" y="1" width="5" height="9" rx="2.500" fill="currentColor" /><path d="M2.500 7q0 5 5.500 5t5.500-5M8 12v4" strokeWidth="1.700" /></Icon></button>
        <button aria-label="键盘"><Icon size={12}><path d="M1 3h14v11H1z" strokeWidth="1.700" /><path d="M3 6h10M3 8.500h10" strokeWidth="1.500" strokeDasharray="1.500 1" /><path d="M4 11.500h8" strokeWidth="1.500" /></Icon></button>
        <button aria-label="登录"><Icon size={12}><circle cx="7" cy="4" r="3" fill="#b3c2da" stroke="none" /><path d="M1 15q0-7 6-7t6 7z" fill="#b3c2da" stroke="none" /><circle cx="12" cy="12" r="3.500" fill="#8ba3ca" stroke="#fff" /></Icon></button>
        <button aria-label="皮肤"><Icon size={12}><path d="M5 2q3 2 6 0l4 3-2 3-1-1v8H4V7L3 8 1 5z" fill="currentColor" /></Icon></button>
        <button aria-label="工具箱"><Icon size={12}><path d="M2 2h5v5H2zM2 10h5v5H2zM10 10h5v5h-5z" fill="#f4511e" stroke="#f4511e" /><path d="M10 2h5v5h-5z" stroke="#f4511e" strokeWidth="1.500" /></Icon></button>
      </InputBar>
      <Tip $front $right={5} $bottom={17}>工具箱</Tip>
    </Window>
  );
};

export default App;
